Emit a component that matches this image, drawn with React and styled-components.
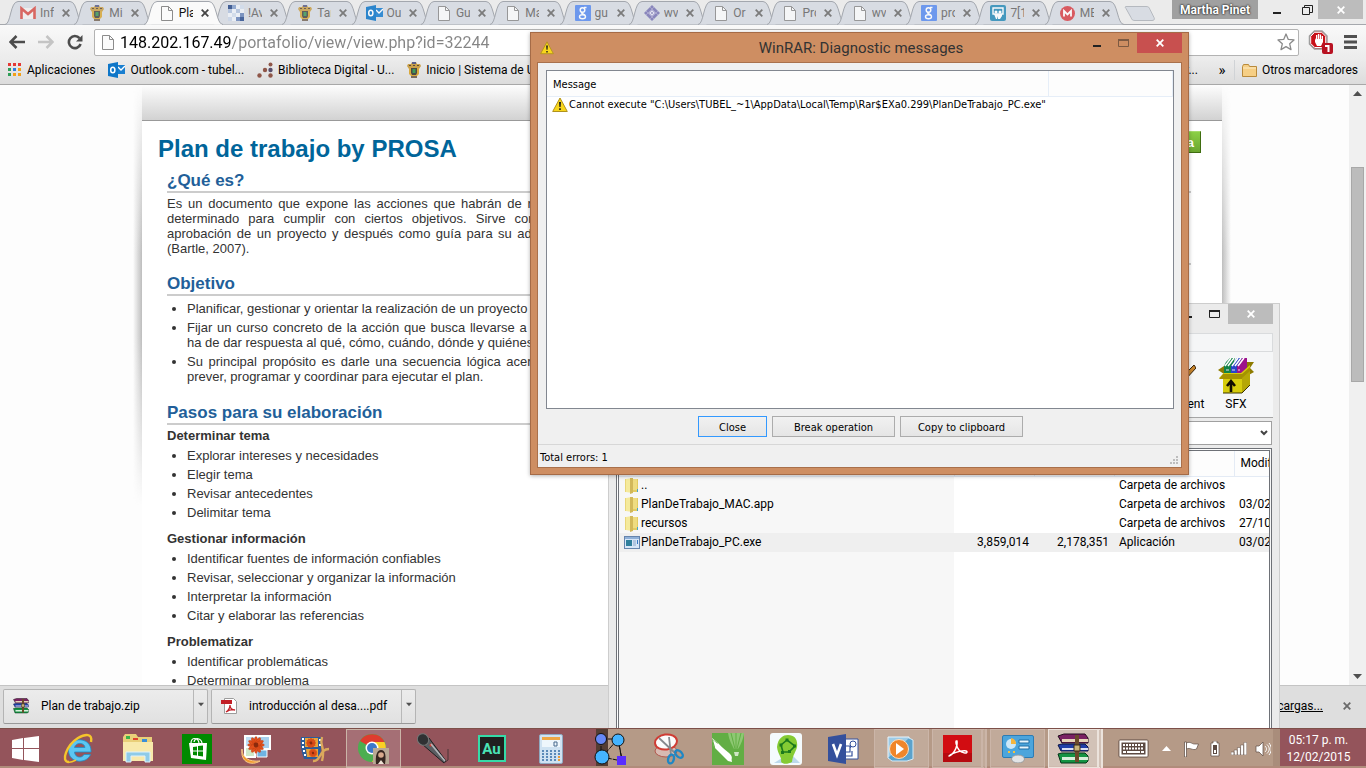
import React from 'react';
import styled, { createGlobalStyle } from 'styled-components';

const ui = 'Roboto, "Open Sans", sans-serif';
const tahoma = '"DejaVu Sans Condensed", "DejaVu Sans", sans-serif';
const arial = '"Liberation Sans", Arial, sans-serif';

const GlobalStyle = createGlobalStyle`
  *, *::before, *::after { box-sizing: border-box; }
  body { margin: 0; font-family: ${ui}; font-size: 12px; color: #000; }
  button, input, select { font: inherit; color: inherit; margin: 0; padding: 0; border: 0; background: none; }
  svg { display: block; flex: none; }
  h1, h2, h3, p, ul { margin: 0; padding: 0; }
`;

const Desktop = styled.div`
  position: relative;
  display: flex;
  flex-direction: column;
  height: 100vh;
  overflow: hidden;
`;

/* ---------- icons ---------- */

const PageIcon = ({ w = 12, h = 15 }) => (
  <svg width={w} height={h} viewBox="0 0 12 15">
    <path d="M.5.5h7l4 4v10H.5z" fill="#fbfbfb" stroke="#8c8c8c" />
    <path d="M7.5.5v4h4" fill="none" stroke="#8c8c8c" />
  </svg>
);
const GmailIcon = () => (
  <svg width="16" height="14" viewBox="0 0 16 14">
    <path d="M1 2h14v11H1z" fill="#f3f0ef" />
    <path d="M1.500 13V2.500L8 8l6.500-5.500V13" fill="none" stroke="#d9534c" strokeWidth="2.600" />
  </svg>
);
const CrestIcon = () => (
  <svg width="14" height="16" viewBox="0 0 14 16">
    <path d="M1 2h3l1-2h4l1 2h3l1 2-2 3H2L0 4z" fill="#c9a04a" />
    <path d="M5 0h4v2H5z" fill="#5b5f8a" /><path d="M2 3h2v1H2zM6 3h2v1H6zM10 3h2v1h-2z" fill="#5d4a3a" />
    <path d="M2 6h10v6l-2 2H4l-2-2z" fill="#d9a93c" />
    <path d="M4 6h6v5l-1 2H5l-1-2z" fill="#4a4a44" /><path d="M5.500 7h3v4h-3z" fill="#3f9a58" />
    <path d="M4 14h6v2H4z" fill="#7a6a5a" />
  </svg>
);
const MosaicIcon = () => (
  <svg width="16" height="16" viewBox="0 0 16 16">
    <rect width="16" height="16" fill="#eef2f8" />
    <path d="M0 0h4v4H0z" fill="#2a4a87" /><path d="M4 0h4v4H4z" fill="#88a2cc" />
    <path d="M0 4h4v4H0zM8 4h4v4H8z" fill="#b2c3de" /><path d="M12 0h4v4h-4zM4 8h4v4H4z" fill="#d1dcec" />
    <path d="M12 8h4v4h-4zM8 12h4v4H8z" fill="#6c88ba" /><path d="M12 12h4v4h-4z" fill="#2f5190" /><path d="M0 12h4v4H0z" fill="#c9d5e8" />
  </svg>
);
const OutlookIcon = () => (
  <svg width="17" height="16" viewBox="0 0 17 16">
    <path d="M9 3h8v9H9z" fill="#1a7fd0" /><path d="M10 5l3 3 4-4" fill="none" stroke="#fff" strokeWidth="1.300" />
    <path d="M0 2l10-2v16L0 14z" fill="#0e76c8" />
    <ellipse cx="4.800" cy="8" rx="2.100" ry="2.800" fill="none" stroke="#fff" strokeWidth="1.500" />
  </svg>
);
const GoogleIcon = () => (
  <svg width="16" height="16" viewBox="0 0 16 16">
    <rect width="16" height="16" rx="1" fill="#5b8def" />
    <circle cx="7.500" cy="5" r="2.300" fill="none" stroke="#fff" strokeWidth="1.500" />
    <path d="M9 2.500h2.500M7 7.300c-2 1 2.500 1.700 3 3" fill="none" stroke="#fff" strokeWidth="1.300" />
    <ellipse cx="7.500" cy="11.800" rx="3" ry="2" fill="none" stroke="#fff" strokeWidth="1.400" />
  </svg>
);
const DiamondIcon = () => (
  <svg width="16" height="16" viewBox="0 0 16 16">
    <path d="M8 0l8 8-8 8-8-8z" fill="#7c78b6" />
    <path d="M8 5l3 3-3 3-3-3z" fill="#e4e3f3" /><path d="M8 7l1 1-1 1-1-1z" fill="#5b569c" />
    <path d="M2 6l8 8M6 2l8 8M6 14l8-8M2 10l8-8" stroke="#b8b6da" strokeWidth=".6" />
  </svg>
);
const ShareIcon = () => (
  <svg width="16" height="16" viewBox="0 0 16 16">
    <rect width="16" height="16" rx="2" fill="#2c8db8" />
    <path d="M3 3h10v6H3z" fill="none" stroke="#fff" strokeWidth="1.400" />
    <circle cx="6" cy="7" r="1.500" fill="#fff" /><circle cx="10" cy="7" r="1.500" fill="#fff" /><path d="M4 9h8v2l-2 3H8v-3l-1 3H6z" fill="#fff" />
  </svg>
);
const MegaIcon = () => (
  <svg width="15" height="15" viewBox="0 0 15 15">
    <circle cx="7.500" cy="7.500" r="7.500" fill="#d9444a" />
    <path d="M4 10.500V5l3.500 3.500L11 5v5.500" fill="none" stroke="#fff" strokeWidth="1.800" />
  </svg>
);
const CrossIcon = ({ size = 8, color = '#6a6a6a', w = 1.8 }) => (
  <svg width={size} height={size} viewBox="0 0 8 8"><path d="M.7.7l6.600 6.600M7.300.7L.7 7.300" stroke={color} strokeWidth={w} /></svg>
);
const ArrowIcon = ({ color, flip }) => (
  <svg width="16" height="14" viewBox="0 0 16 14">
    <path d={flip ? 'M0 7h14M8.500 1l6 6-6 6' : 'M16 7H2M7.500 1l-6 6 6 6'} fill="none" stroke={color} strokeWidth="2.600" />
  </svg>
);
const ReloadIcon = () => (
  <svg width="16" height="16" viewBox="0 0 16 16">
    <path d="M12.500 4.200A6 6 0 1 0 13.600 10" fill="none" stroke="#4c4c4c" strokeWidth="2.600" />
    <path d="M15.500 1v6.500H9z" fill="#4c4c4c" />
  </svg>
);
const StarIcon = () => (
  <svg width="18" height="18" viewBox="0 0 18 18">
    <path d="M9 1l2.300 5.400 5.700.5-4.300 3.900 1.300 5.800L9 13.600l-5 3 1.300-5.800L1 6.900l5.700-.5z" fill="#fff" stroke="#8a8a8a" strokeWidth="1.300" strokeLinejoin="round" />
  </svg>
);
const AdblockIcon = () => (
  <svg width="25" height="24" viewBox="0 0 25 24">
    <path d="M6.500 1h7.500l5 5v8l-5 5H6.500l-5-5V6z" fill="#c81018" stroke="#9d9d9d" strokeWidth="1.500" />
    <path d="M6.700 2.300h7l4 4v7.200l-4 4h-7l-4-4V6.300z" fill="none" stroke="#fff" />
    <path d="M7 8v4l2 4h4l2-4V6h-1.300v3h-.6V4.600h-1.300V9h-.6V4H9.900v5h-.6V5H8v5z" fill="#fff" />
    <rect x="14" y="13" width="11" height="11" rx="2" fill="#b81222" />
    <path d="M17 16h3.500v6" fill="none" stroke="#fff" strokeWidth="2" />
  </svg>
);
const MenuIcon = () => (
  <svg width="13" height="14" viewBox="0 0 13 14"><path d="M0 1.500h13M0 7h13M0 12.500h13" stroke="#505050" strokeWidth="3" /></svg>
);
const AppsIcon = () => (
  <svg width="14" height="14" viewBox="0 0 14 14">
    {['#e53935', '#e53935', '#e53935', '#2e9e57', '#2f7de1', '#f2a019', '#2e9e57', '#f2a019', '#f2a019'].map((c, i) => (
      <rect key={i} x={(i % 3) * 5} y={Math.floor(i / 3) * 5} width="3" height="3" fill={c} />
    ))}
  </svg>
);
const DotsIcon = () => (
  <svg width="16" height="16" viewBox="0 0 16 16" fill="#8f5648">
    <circle cx="2.500" cy="13.500" r="2.200" /><circle cx="8" cy="8" r="2.200" /><circle cx="13.500" cy="13.500" r="2.200" />
    <circle cx="13.500" cy="2.500" r="2" /><circle cx="13.500" cy="8" r="2.200" fill="#574d6b" />
  </svg>
);
const BookmarkFolder = () => (
  <svg width="15" height="13" viewBox="0 0 15 13">
    <path d="M.5 12.500v-10l1-2h5l1 2h7v10z" fill="#f6cf85" stroke="#b98a3b" /><path d="M1 4h13" stroke="#fdebc4" />
  </svg>
);
const WarnIcon = ({ size = 16 }) => (
  <svg width={size} height={size} viewBox="0 0 16 16">
    <path d="M8 1l7.300 13.500H.7z" fill="#f8d61c" stroke="#b0921c" strokeLinejoin="round" />
    <path d="M7 5h2l-.4 5H7.400zM7.200 11.300h1.600v1.700H7.200z" fill="#1b1b1b" />
  </svg>
);
const FolderIcon = () => (
  <svg width="14" height="16" viewBox="0 0 14 16">
    <path d="M0 1h7v13H0z" fill="#ead678" /><path d="M6 1h7v13H6z" fill="#e3cb62" />
    <path d="M1 1l6-1v15l-6-1z" fill="#f5ea9c" /><path d="M5 0h3v15l-3 1z" fill="#d2b85a" /><path d="M8 1h4v11H8z" fill="#efdc80" /><path d="M12 11h1v3h-1z" fill="#4aa5c4" />
  </svg>
);
const ExeIcon = () => (
  <svg width="16" height="13" viewBox="0 0 16 13">
    <rect x=".5" y=".5" width="15" height="12" fill="#d7e6f7" stroke="#6685ad" />
    <path d="M1 1h14v2H1z" fill="#8fb0d8" /><path d="M2 4h6v6H2z" fill="#2f7f9c" /><path d="M9 5h3M9 7h3M9 9h3" stroke="#8aa6c8" /><path d="M13.500 4v4" stroke="#3577c4" />
  </svg>
);
const BooksIcon = ({ size = 16 }) => (
  <svg width={size} height={size} viewBox="0 0 32 32">
    <path d="M1 3l6-2h21l3 4v5H5z" fill="#7a2163" stroke="#220d1c" /><path d="M5 6h26v3H5z" fill="#e6d4b8" />
    <path d="M1 12l4-1h23l3 3v4H4z" fill="#213fa8" stroke="#0c1445" /><path d="M5 15h26v2H5z" fill="#dcdff2" />
    <path d="M1 21l4-1h23l3 3v5l-2 2H4z" fill="#159343" stroke="#08351a" /><path d="M5 24h26v3H5z" fill="#d8eedb" />
    <path d="M18 2h4v27h-4z" fill="#6b4a2a" /><path d="M17 12h6v6h-6z" fill="#c9b37a" stroke="#3a2c18" />
  </svg>
);
const PdfIcon = () => (
  <svg width="16" height="16" viewBox="0 0 16 16">
    <path d="M3.500.5h9l3 3v12h-12z" fill="#fff" stroke="#9c9c9c" /><path d="M0 2h11v4H0z" fill="#c21f26" />
    <path d="M5 14c3-2 4-5 4-7 0 3 2 5 5 5-3-1-6 0-9 2z" fill="none" stroke="#c21f26" strokeWidth="1.300" />
  </svg>
);
const SfxIcon = () => (
  <svg width="36" height="36" viewBox="0 0 36 36">
    <path d="M8 4l4-4h5l-4 16H6V8z" fill="#128347" /><path d="M13 8l6-8h5l-5 16h-6z" fill="#2745c8" /><path d="M19 8l5-8h5v11l-6 5h-4z" fill="#9c128c" />
    <path d="M7 8l6-8M10 8l6-8M14 8l6-8M17 8l6-8M20 8l6-8" stroke="#fff" strokeWidth="1.500" />
    <path d="M8 12h3M14 12h3M20 12h2" stroke="#e8d9f4" />
    <path d="M0 12l6-4v8zM29 4h7l-4 6 4 4-7 4z" fill="#8d7b00" />
    <path d="M1 20l5-5h17l9-8v20l-8 8H5V20z" fill="#d6cc0c" /><path d="M5 16h19l8-7v5l-8 7H1z" fill="#a59200" />
    <path d="M24 20v15l8-8V13z" fill="#b5a706" /><path d="M13 34V24M9 28l4-5 4 5" fill="none" stroke="#100c00" strokeWidth="2.600" /><path d="M5 35h19l8-8" fill="none" stroke="#3b3400" />
  </svg>
);
const CommentIcon = () => (
  <svg width="36" height="36" viewBox="0 0 36 36">
    <path d="M2 2h26v32H2z" fill="#33373c" /><path d="M4 4h20v28H4z" fill="#fff" />
    <path d="M34 7L22 19l-2 5 5-2L36 10z" fill="#c7842c" stroke="#35230c" />
  </svg>
);
const WinIcon = () => (
  <svg width="27" height="26" viewBox="0 0 27 26" fill="#fff"><path d="M0 4l11-2v10H0zM12 2l15-2v12H12zM0 13h11v11L0 22zM12 13h15v13l-15-2z" /></svg>
);
const IeIcon = () => (
  <svg width="32" height="32" viewBox="0 0 32 32">
    <path d="M28 19H11.500c.5 6 7.500 6.500 9.500 2.500h6.500C24 31 6 31 5.500 17.500 5.500 3 29 3 28 19zM11.500 14.500H22c-.5-5.500-9.500-5.500-10.500 0z" fill="#5cc6f2" stroke="#1b8fc9" strokeWidth=".8" />
    <path d="M6 29C-3 29 4 12 15 5c7-4 15-5 13 4" fill="none" stroke="#f5c52c" strokeWidth="2.400" />
    <path d="M5 29c2 1 6-1 8-2" fill="none" stroke="#f5c52c" strokeWidth="1.600" />
  </svg>
);
const ExplorerIcon = () => (
  <svg width="32" height="30" viewBox="0 0 32 30">
    <path d="M1 3l2-3h11l2 3h14v24H1z" fill="#e9cf79" /><path d="M4 2h4v3H4z" fill="#3bb54a" /><path d="M11 4h5v2h-5z" fill="#e0432f" /><path d="M20 5h5v3h-5z" fill="#3a8fd8" />
    <path d="M1 8h30v19H1z" fill="#f8e9ab" /><path d="M4 28V18h24v10h-5v-6H9v6z" fill="#8fcbe8" stroke="#dff2fb" />
  </svg>
);
const StoreIcon = () => (
  <svg width="30" height="30" viewBox="0 0 30 30">
    <rect width="30" height="30" fill="#008a00" /><path d="M7 9h18l-1 17-15-2z" fill="#fff" />
    <path d="M9 9c0-6 7-6 8 0M12 8c1-5 7-4 8 1" fill="none" stroke="#fff" strokeWidth="1.200" /><path d="M11 13l4-.5v4h-4zM16 12l5-.5v5h-5zM11 17.500h4v4l-4-.5zM16 17.500h5v5l-5-.8z" fill="#008a00" />
  </svg>
);
const Flower = ({ x, y, s = 1 }) => (
  <g transform={`translate(${x} ${y}) scale(${s})`}>
    {[0, 30, 60, 90, 120, 150].map((a) => <ellipse key={a} rx="7" ry="1.800" fill="#e0501c" stroke="#c23c10" strokeWidth=".4" transform={`rotate(${a})`} />)}
    <circle r="2" fill="#8b2a0c" />
  </g>
);
const PhotoIcon = () => (
  <svg width="32" height="30" viewBox="0 0 32 30">
    <path d="M5 2h20v16H5z" fill="#bfe0f6" stroke="#fff" strokeWidth="2" /><path d="M17 2h13v13H17z" fill="#a7d1ef" stroke="#fff" strokeWidth="2" />
    <path d="M5 13h10v10H5z" fill="#cfe8c9" stroke="#fff" strokeWidth="2" /><path d="M17 16h10v7H17z" fill="#6fb4e3" stroke="#fff" /><Flower x="16" y="11" s="1.200" />
    <path d="M2 15c0 9 7 13 18 12-8 5-20 2-18-12z" fill="#f29b2e" stroke="#f8c98a" />
  </svg>
);
const MovieIcon = () => (
  <svg width="31" height="28" viewBox="0 0 31 28">
    <path d="M2 2h21l-2 22H5C2 16 1 9 2 2z" fill="#2c5d9b" /><path d="M6 3h13v9H6zM7 14h12v8H8z" fill="#e9a33a" />
    <Flower x="12" y="8" s=".7" /><Flower x="14" y="18" s=".6" /><path d="M3 4h2M3 8h2M3 12h2M4 16h2M5 20h2M20 5h2M20 10h2" stroke="#fff" strokeWidth="2" />
    <path d="M23 2c-3 10 4 9 0 24M14 26c8 1 6-12 16-12" fill="none" stroke="#dba95c" strokeWidth="2.400" />
  </svg>
);
const ChromeIcon = () => (
  <svg width="31" height="30" viewBox="0 0 31 30">
    <circle cx="14" cy="14" r="14" fill="#4cae50" /><path d="M14 14L2 7A14 14 0 0 1 26.500 8z" fill="#df3c2e" /><path d="M14 8h12.500A14 14 0 0 1 14 28l6-11z" fill="#fbcf26" />
    <circle cx="14" cy="14" r="6.500" fill="#fff" /><circle cx="14" cy="14" r="5" fill="#3d78c9" />
    <rect x="15" y="14" width="16" height="16" fill="#b9a995" /><path d="M18 30c-1-8 1-14 5-14 5 0 5 7 4 14z" fill="#362620" /><circle cx="23" cy="21" r="2.800" fill="#d7a98c" /><path d="M20 30l3-4 3 4z" fill="#efe3d6" />
  </svg>
);
const MicIcon = () => (
  <svg width="32" height="32" viewBox="0 0 32 32">
    <path d="M5 11l7-6 17 23-2 2z" fill="#5a5d61" stroke="#1e1f20" /><ellipse cx="6" cy="6.500" rx="5.500" ry="6" fill="#2f3133" stroke="#777" transform="rotate(-35 6 6.500)" /><path d="M13 13l2-2" stroke="#e2362a" strokeWidth="2.400" />
    <path d="M14 11l14 17" stroke="#b3b6ba" strokeWidth="1.600" /><path d="M31 16v11l-4 3" fill="none" stroke="#4a3236" />
  </svg>
);
const AuBadge = styled.span`
  display: grid;
  place-items: center;
  width: 28px;
  height: 27px;
  border: 2px solid #35dba8;
  background: #20201f;
  color: #4be3b5;
  font-size: 15px;
  font-weight: 700;
  line-height: 22px;
`;
const CalcIcon = () => (
  <svg width="24" height="30" viewBox="0 0 24 30">
    <rect x=".5" y=".5" width="23" height="29" rx="1.500" fill="#cfe2f2" stroke="#8fa9c0" /><path d="M3 3h18v3H3z" fill="#eea644" /><path d="M3 6h18v7H3z" fill="#eef6fc" />
    <path d="M15 8h3v4h-3z" fill="none" stroke="#46688c" />
    {[0, 1, 2, 3].map((r) => [0, 1, 2, 3, 4].map((c) => <rect key={`${r}${c}`} x={3 + c * 4} y={16 + r * 3} width="2" height="2" fill={c === 4 && r > 1 ? '#ec9a34' : '#5b8ab8'} />))}
  </svg>
);
const GraphIcon = () => (
  <svg width="32" height="34" viewBox="0 0 32 34">
    <path d="M7 7h17M7 7v18M24 7L8 25l20 4zM24 7l4 20" fill="none" stroke="#111" strokeDasharray="6 1" />
    <circle cx="7" cy="7" r="5.500" fill="#6688f5" stroke="#111" /><circle cx="24" cy="8" r="6" fill="#45b4ff" stroke="#111" /><circle cx="8" cy="25" r="7" fill="#45b4ff" stroke="#111" />
    <path d="M23 24h9v9h-9z" fill="#5a2cff" />
  </svg>
);
const SnipIcon = () => (
  <svg width="31" height="32" viewBox="0 0 31 32">
    <ellipse cx="13" cy="18" rx="11" ry="6" fill="#d8bab2" stroke="#b3584d" /><ellipse cx="13" cy="9" rx="11" ry="7.500" fill="#fbfbfb" stroke="#cf3c34" strokeWidth="2" transform="rotate(-8 13 9)" />
    <path d="M6 5l16 15M16 4l2 18" stroke="#85898e" strokeWidth="1.800" /><ellipse cx="18" cy="26" rx="2.800" ry="4.500" fill="none" stroke="#1f87c4" strokeWidth="2.400" transform="rotate(15 18 26)" /><ellipse cx="26" cy="21" rx="2.800" ry="4.500" fill="none" stroke="#1f87c4" strokeWidth="2.400" transform="rotate(-45 26 21)" />
  </svg>
);
const CorelIcon = () => (
  <svg width="32" height="32" viewBox="0 0 32 32">
    <rect width="32" height="32" fill="#62ae44" /><path d="M0 5l2 9 14 14 4 1-1-5L6 10z" fill="#fff" /><path d="M4 12l11 12" stroke="#62ae44" /><path d="M0 6l2 10 4-6z" fill="#62ae44" /><path d="M1 7l2 7 15 14c3-3 2-5-1-8z" fill="#fff" />
    <path d="M16 0c1 7 4 12 6 16h4c3-5 5-9 6-16z" fill="#8ec873" /><path d="M19 0l4 16M24 0v16M29 0l-4 16" stroke="#62ae44" /><path d="M22 19h5l-1 4h-3z" fill="#cfe6c5" />
  </svg>
);
const HeadIcon = () => (
  <svg width="32" height="32" viewBox="0 0 32 32">
    <rect width="32" height="32" rx="3" fill="#f4fbfd" /><path d="M4 30h26L20 20z" fill="#bcd9ec" />
    <path d="M7 14C8 5 13 2 18 2c7 0 10 5 9 12-1 5-4 7-5 15-5 3-11 2-11-1 1-4-3-6-4-14z" fill="#84cb34" />
    <path d="M17 7l-6 5 2 7h6l6-6z" fill="none" stroke="#1c7a1d" strokeWidth="1.600" /><path d="M15.500 5.500h3v3h-3zM9.500 10.500h3v3h-3zM23 11.500h3v3h-3zM11 18h3v3h-3zM18 17h3v3h-3z" fill="#1c7a1d" />
  </svg>
);
const VisioIcon = () => (
  <svg width="31" height="30" viewBox="0 0 31 30">
    <path d="M16 5h14v20H16z" fill="#fff" stroke="#34509c" /><path d="M18 12h4v6h-4M24 17v5h-6M22 14l3-4" fill="none" stroke="#34509c" strokeWidth="1.200" /><circle cx="25" cy="10" r="3" fill="#fff" stroke="#34509c" />
    <path d="M0 3l18-3v30L0 27z" fill="#34509c" /><path d="M5 10l4 11 4-11" fill="none" stroke="#fff" strokeWidth="2.600" />
  </svg>
);
const WmpIcon = () => (
  <svg width="30" height="26" viewBox="0 0 30 26">
    <path d="M1 1h21v21H1z" fill="#9dcbe6" stroke="#eaf6fd" /><path d="M22 2l4 2v19l-6 2H5l-4-3" fill="#5ba2cb" stroke="#d4ebf7" /><circle cx="12" cy="13" r="9.500" fill="#f0862a" stroke="#fbe0c2" /><path d="M9 7l8 6-8 6z" fill="#fff" />
  </svg>
);
const AdobeIcon = () => (
  <svg width="29" height="27" viewBox="0 0 29 27">
    <rect width="29" height="27" fill="#d20d12" /><path d="M0 18h29v9H0z" fill="#a3090d" opacity=".6" />
    <path d="M6 21c4-1 9-9 8-15-2-1-1 5 2 9 3 3 8 4 8 2 0-3-14 0-18 4z" fill="none" stroke="#fff" strokeWidth="1.500" strokeLinejoin="round" />
  </svg>
);
const PanelIcon = () => (
  <svg width="32" height="28" viewBox="0 0 32 28">
    <rect x=".5" y=".5" width="31" height="22" rx="1.500" fill="#4ca5dc" stroke="#2c7cb4" /><circle cx="9" cy="9" r="5" fill="#cde8f8" /><path d="M9 9V3a6 6 0 0 1 5 6z" fill="#f5b53c" />
    <path d="M17 5h10v3H17zM17 11h10v3H17z" fill="#e8f5fc" stroke="#1f6ea6" /><path d="M6 17h2M11 17h2" stroke="#f6c13c" strokeWidth="2" /><ellipse cx="16" cy="24" rx="6.500" ry="4" fill="#e2e4e6" stroke="#9a9da0" />
  </svg>
);
const KeyboardIcon = () => (
  <svg width="31" height="19" viewBox="0 0 31 19">
    <rect x="1" y="1" width="29" height="17" rx="1" fill="none" stroke="#5c4a42" /><rect x="2.500" y="2.500" width="26" height="14" fill="#5c4a42" stroke="#fff" strokeWidth="2" />
    <path d="M5 6h21M5 9.500h21" stroke="#fff" strokeWidth="2" strokeDasharray="2 1" /><path d="M5 13h3M9 13h13M23 13h3" stroke="#fff" strokeWidth="2" />
  </svg>
);
const UpIcon = ({ color = '#fff' }) => (
  <svg width="9" height="5" viewBox="0 0 9 5"><path d="M0 5l4.500-5L9 5z" fill={color} /></svg>
);
const DownIcon = ({ w = 9, color = '#505050' }) => (
  <svg width={w} height="5" viewBox="0 0 9 5"><path d="M0 0h9L4.500 5z" fill={color} /></svg>
);
const FlagIcon = () => (
  <svg width="16" height="16" viewBox="0 0 16 16"><path d="M1.500 16V1h2v15z" fill="#fff" stroke="#5c4a42" strokeWidth=".7" /><path d="M3.500 2c4-2 5 1 8 1h4l-2 5c-4 2-6-2-10 0z" fill="#fff" stroke="#5c4a42" strokeWidth=".7" /></svg>
);
const BatteryIcon = () => (
  <svg width="10" height="16" viewBox="0 0 10 16"><path d="M3 0h4v2h2v13H1V2h2z" fill="#fff" stroke="#5c4a42" strokeWidth=".7" /><path d="M3 4h4v9H3z" fill="#5c4a42" /><path d="M4 9h2v3H4z" fill="#fff" /></svg>
);
const SignalIcon = () => (
  <svg width="16" height="13" viewBox="0 0 16 13" fill="#fff" stroke="#5c4a42" strokeWidth=".5"><path d="M0 10h3v3H0zM3.200 8h3v5h-3zM6.400 5.500h3V13h-3zM9.600 3h3v10h-3zM12.800.3h3V13h-3z" /></svg>
);
const VolumeIcon = () => (
  <svg width="16" height="16" viewBox="0 0 16 16"><path d="M1 5h3l4-4v14l-4-4H1z" fill="#fff" stroke="#5c4a42" strokeWidth=".7" /><path d="M10 5c2 2 2 4 0 6M12 3.500c3 3 3 6 0 9M14 2c3 4 3 8 0 12" fill="none" stroke="#fff" /></svg>
);
const MinimizeIcon = () => (
  <svg width="8" height="8"><path d="M0 7h8" stroke="#222" strokeWidth="2" /></svg>
);
const MaximizeIcon = ({ color = '#222' }) => (
  <svg width="11" height="8"><path d="M.5 1h10v6.500H.5z" fill="none" stroke={color} /><path d="M0 1h11" stroke={color} strokeWidth="2" /></svg>
);

/* ---------- browser ---------- */

const Browser = styled.div`
  flex: 1;
  min-height: 0;
  display: flex;
  flex-direction: column;
`;

const TabStrip = styled.div`
  display: flex;
  height: 25px;
  padding: 0 3px 0 5px;
  background: #ebebeb;
  border-bottom: 1px solid #a5a8ad;
`;
const TabList = styled.div`
  display: flex;
  flex: 0 0 1109px;
`;
const Tab = styled.button`
  position: relative;
  z-index: ${(p) => (p.$active ? 2 : 1)};
  display: flex;
  align-items: center;
  flex: 1 1 0;
  min-width: 0;
  height: 25px;
  padding: 1px 0 0 15px;
  color: ${(p) => (p.$active ? '#111' : '#777')};
`;
const TabShape = styled.svg`
  position: absolute;
  left: 0;
  top: 1px;
  z-index: -1;
`;
const TabIcon = styled.span`
  display: flex;
  justify-content: center;
  width: 16px;
  opacity: ${(p) => (p.$active ? 1 : 0.85)};
`;
const TabLabel = styled.span`
  width: 14px;
  margin: 0 8px 0 4px;
  overflow: hidden;
  white-space: nowrap;
  text-align: left;
`;
const NewTab = styled.button`
  width: 34px;
  height: 20px;
  margin-top: 3px;
`;
const BrowserControls = styled.div`
  display: flex;
  align-items: flex-start;
  margin-left: auto;
`;
const UserBadge = styled.button`
  height: 19px;
  width: 86px;
  background: #a0a0a0;
  color: #fff;
  font-weight: 700;
  line-height: 18px;
  text-shadow: 0 0 2px #222, 0 0 2px #222;
`;
const WindowButton = styled.button`
  display: grid;
  place-items: center;
  width: ${(p) => p.$w || 27}px;
  height: ${(p) => p.$h || 20}px;
  background: ${(p) => p.$bg || 'transparent'};
`;
const Toolbar = styled.div`
  display: flex;
  align-items: center;
  height: 34px;
  padding: 0 9px 0 9px;
  background: linear-gradient(#f9f9f9, #ececec);
`;
const NavButton = styled.button`
  display: grid;
  place-items: center;
  width: 16px;
  margin-right: 13px;
`;
const Omnibox = styled.label`
  display: flex;
  align-items: center;
  flex: 1;
  height: 27px;
  margin: 0 9px 0 -2px;
  padding: 0 3px 0 7px;
  gap: 6px;
  background: #fff;
  border: 1px solid #b3b3b3;
  border-radius: 2px;
`;
const UrlInput = styled.input`
  flex: 1;
  min-width: 0;
  height: 24px;
  font-size: 16px;
  outline: none;
  color: transparent;
  background: linear-gradient(to right, #000 111px, #858585 111px);
  background-clip: text;
  -webkit-background-clip: text;
`;
const MenuButton = styled.button`
  margin-left: ${(p) => p.$gap || 0}px;
`;
const BookmarksBar = styled.nav`
  display: flex;
  align-items: center;
  height: 26px;
  padding: 0 8px 3px 8px;
  background: linear-gradient(#ececec, #dcdcdc);
  border-bottom: 1px solid #a8a8a8;
`;
const Bookmark = styled.a`
  display: flex;
  align-items: center;
  gap: 5px;
  margin-right: ${(p) => (p.$last ? 0 : 13)}px;
  color: #000;
  text-decoration: none;
  white-space: nowrap;
`;
const BookmarksEnd = styled.div`
  display: flex;
  align-items: center;
  margin-left: auto;
`;
const Chevron = styled.button`
  width: 37px;
  height: 20px;
  margin-right: 7px;
  padding-left: 12px;
  border-right: 1px solid #d0d3d6;
  font-size: 15px;
  line-height: 16px;
`;

const Viewport = styled.div`
  flex: 1;
  min-height: 0;
  display: flex;
  background: #fdfdfd;
`;
const PageScroll = styled.div`
  flex: 1;
  overflow: hidden;
  padding: 0 127px 0 142px;
`;
const Page = styled.main`
  position: relative;
  min-height: 100%;
  background: #fff;
  font-family: ${arial};
  font-size: 13px;
  line-height: 15px;
  color: #333;
  &::before, &::after {
    content: '';
    position: absolute;
    top: 0;
    width: 9px;
    height: 420px;
    mask-image: linear-gradient(transparent, #000 40%, #000 60%, transparent);
  }
  &::before { right: 100%; background: linear-gradient(to left, #bdbdbd, transparent); }
  &::after { left: 100%; background: linear-gradient(to right, #bdbdbd, transparent); }
`;
const PageBand = styled.header`
  height: 36px;
  background: linear-gradient(#fdfdfd, #d2d2d2);
  border-bottom: 1px solid #999;
`;
const PageColumns = styled.div`
  display: grid;
  grid-template-columns: 1fr 260px;
  gap: 30px;
  padding: 0 31px 0 16px;
`;
const PageTitle = styled.h1`
  margin-top: 14px;
  font-size: 24px;
  line-height: 28px;
  color: #00659a;
`;
const Article = styled.article`
  padding: 8px 0 0 9px;
`;
const Heading = styled.h2`
  margin-top: ${(p) => (p.$first ? 0 : 18)}px;
  font-size: 17px;
  line-height: 20px;
  color: #225f99;
  border-bottom: 2px solid #ccc;
`;
const SubHeading = styled.h3`
  margin-top: ${(p) => (p.$first ? 3 : 10)}px;
  font-size: 13px;
  line-height: 15px;
`;
const Spread = styled.span`
  display: block;
  width: 372px;
  white-space: nowrap;
  text-align-last: justify;
`;
const Plain = styled.span`
  display: block;
  white-space: nowrap;
`;
const Intro = styled.p`
  margin-top: 3px;
`;
const Bullets = styled.ul`
  margin-top: 5px;
  padding: 0 0 1px 20px;
  ${Spread} { width: 351px; }
`;
const Bullet = styled.li`
  & + & { margin-top: 4px; }
`;
const Aside = styled.aside`
  padding-top: 10px;
  display: flex;
  flex-direction: column;
`;
const GreenButton = styled.button`
  align-self: flex-end;
  width: 70px;
  height: 22px;
  margin: 0 -10px 38px 0;
  padding-right: 6px;
  text-align: right;
  background: linear-gradient(#8bd046, #6aa52f);
  border: 1px solid #3f6d10;
  border-top-color: #a4dc6c;
  color: #fff;
  font-weight: 700;
`;
const AsideRule = styled.hr`
  width: 100%;
  margin: 0 0 70px;
  border: 0;
  border-top: 2px solid #ccc;
`;

const ScrollBar = styled.div`
  display: flex;
  flex-direction: column;
  width: 17px;
  background: #f0f0f0;
`;
const ScrollButton = styled.button`
  display: grid;
  place-items: center;
  height: 17px;
`;
const Track = styled.div`
  flex: 1;
  display: grid;
  grid-template-rows: 65fr 215fr 286fr;
  padding: 0 2px;
`;
const Thumb = styled.div`
  grid-row: 2;
  background: #bcbcbc;
  border: 1px solid #a8a8a8;
`;

const DownloadBar = styled.footer`
  display: flex;
  align-items: center;
  gap: 3px;
  height: 43px;
  padding: 0 15px 2px 3px;
  background: #dedede;
  border-top: 1px solid #c4c4c4;
`;
const DownloadItem = styled.div`
  display: flex;
  width: 205px;
  height: 35px;
  background: linear-gradient(#ececec, #e1e1e1);
  border: 1px solid #b4b4b4;
  border-bottom-color: #999;
  border-radius: 2px;
`;
const DownloadFile = styled.button`
  display: flex;
  align-items: center;
  gap: 12px;
  flex: 1;
  padding-left: 9px;
  white-space: nowrap;
`;
const DownloadMore = styled.button`
  display: grid;
  place-items: start center;
  width: 14px;
  padding-top: 12px;
  border-left: 1px solid #b8b8b8;
`;
const AllDownloads = styled.a`
  margin-left: auto;
  margin-right: 17px;
  color: #000;
`;

/* ---------- archive window ---------- */

const ArchiveWindow = styled.section`
  position: absolute;
  left: 608px;
  top: 303px;
  bottom: 40px;
  width: 672px;
  display: flex;
  flex-direction: column;
  padding: 0 6px 0 7px;
  background: #ebebeb;
  border: 1px solid #cdcdcd;
  border-bottom: 0;
`;
const ArchiveTitle = styled.header`
  display: flex;
  justify-content: flex-end;
  height: 29px;
`;
const ArchiveMenu = styled.div`
  height: 19px;
  background: #f5f6f7;
  border: 1px solid #d9dbdd;
  border-width: 1px 1px 1px 0;
`;
const ArchiveTools = styled.div`
  display: flex;
  justify-content: flex-end;
  height: 66px;
  padding: 6px 8px 0 0;
  background: #f5f6f7;
  border-bottom: 1px solid #a6a6a6;
`;
const ToolButton = styled.button`
  display: flex;
  flex-direction: column;
  align-items: center;
  width: 58px;
  line-height: 20px;
`;
const PathSelect = styled.div`
  position: relative;
  display: flex;
  margin: 3px 1px 3px 0;
  svg { position: absolute; right: 4px; top: 9px; pointer-events: none; }
`;
const PathField = styled.select`
  appearance: none;
  flex: 1;
  height: 24px;
  background: #fff;
  border: 1px solid #a0a0a0;
`;
const FilePane = styled.div`
  flex: 1;
  min-height: 0;
  margin-right: 1px;
  overflow: hidden;
  background: linear-gradient(to right, #f7f7f7 335px, #fff 335px);
  border: 3px double #6e7177;
  border-bottom: 0;
`;
const FileTable = styled.table`
  table-layout: fixed;
  width: 700px;
  border-collapse: collapse;
  white-space: nowrap;
  th { height: 25px; padding: 0 6px; font-weight: 400; text-align: left; background: #fdfdfd; border: 1px solid #e4ebf5; border-width: 0 1px 1px 0; }
  td { height: 19px; padding: 0 5px; line-height: 17px; }
`;
const FileRow = styled.tr`
  background: ${(p) => (p.$selected ? '#efefef' : 'transparent')};
`;
const NumberCell = styled.td`
  text-align: right;
`;
const FileName = styled.span`
  display: flex;
  align-items: center;
  gap: 1px;
`;
const FileIconSlot = styled.span`
  display: flex;
  justify-content: center;
  width: 16px;
`;

/* ---------- dialog ---------- */

const Dialog = styled.section`
  position: absolute;
  left: 530px;
  top: 32px;
  width: 659px;
  display: flex;
  flex-direction: column;
  padding: 0 6px 6px;
  background: #ce8e62;
  border: 1px solid #a56b47;
  box-shadow: 0 1px 4px rgba(0, 0, 0, 0.3);
  font-family: ${tahoma};
  font-size: 11px;
`;
const DialogTitleBar = styled.header`
  display: grid;
  grid-template-columns: 104px 1fr 104px;
  align-items: center;
  height: 29px;
  padding-left: 3px;
  font-family: ${ui};
  h2 { font-size: 15px; font-weight: 400; text-align: center; color: #333; }
`;
const DialogButtons = styled.div`
  display: flex;
  align-self: start;
  justify-content: flex-end;
`;
const DialogBody = styled.div`
  padding-top: 7px;
  background: #f0f0f0;
  border: 1px solid #a9704b;
`;
const MessageList = styled.div`
  height: 339px;
  margin: 0 7px 0 8px;
  background: #fff;
  border: 1px solid #828790;
`;
const MessageTable = styled.table`
  width: 100%;
  border-collapse: collapse;
  table-layout: fixed;
  th { height: 25px; padding: 2px 6px 0; text-align: left; font-weight: 400; background: #fdfdfd; border: 1px solid #e6eef8; border-width: 0 1px 1px 0; }
  td { height: 17px; padding: 0 0 0 5px; }
`;
const MessageLine = styled.span`
  display: flex;
  align-items: center;
  gap: 1px;
  white-space: nowrap;
`;
const ActionRow = styled.div`
  display: flex;
  justify-content: center;
  gap: 5px;
  padding: 7px 0 7px 2px;
`;
const ActionButton = styled.button`
  width: ${(p) => (p.$primary ? 69 : 123)}px;
  height: 21px;
  padding-top: 1px;
  background: linear-gradient(#f1f1f1, #e5e5e5);
  border: 1px solid ${(p) => (p.$primary ? '#3399ff' : '#acacac')};
`;
const StatusBar = styled.div`
  display: flex;
  align-items: center;
  justify-content: space-between;
  height: 23px;
  padding: 2px 2px 0 2px;
  border-top: 1px solid #d7d7d7;
`;

/* ---------- taskbar ---------- */

const TaskBar = styled.footer`
  display: flex;
  align-items: stretch;
  height: 40px;
  background: linear-gradient(to right, #94545b 596px, #553d33 596px, #553d33 608px, #b59a87 608px, #b59a87 1273px, #a98d7b 1273px, #a98d7b 1280px, #94545b 1280px);
  border-top: 1px solid #7d5049;
  box-shadow: inset 0 -2px #b08c7b;
`;
const StartButton = styled.button`
  display: grid;
  place-items: center;
  width: 51px;
`;
const TaskGroup = styled.div`
  display: flex;
  gap: ${(p) => p.$gap}px;
  margin-right: 4px;
`;
const Task = styled.button`
  display: grid;
  place-items: center;
  width: 55px;
  border: 1px solid ${(p) => (p.$state ? (p.$state === 'front' ? '#ece3dc' : '#cbb5a8') : 'transparent')};
  background: ${(p) => (p.$state ? (p.$state === 'front' ? 'rgba(255,255,255,0.4)' : 'rgba(255,255,255,0.16)') : 'transparent')};
  border-right-width: ${(p) => (p.$stack ? 6 : 1)}px;
  border-right-style: ${(p) => (p.$stack ? 'double' : 'solid')};
`;
const Tray = styled.div`
  display: flex;
  align-items: center;
  gap: 8px;
  margin-left: auto;
`;
const TrayButton = styled.button`
  display: grid;
  place-items: center;
  width: ${(p) => p.$w || 16}px;
`;
const Clock = styled.time`
  width: 87px;
  padding-right: 8px;
  text-align: center;
  color: #fff;
  line-height: 17px;
`;

const tabs = [
  ['Inf', GmailIcon], ['Mi', CrestIcon], ['Pla', PageIcon], ['!Av', MosaicIcon], ['Tar', CrestIcon], ['Ou', OutlookIcon],
  ['Gu', PageIcon], ['Ma', PageIcon], ['gu', GoogleIcon], ['wv', DiamondIcon], ['Or', PageIcon], ['Pro', PageIcon],
  ['wv', PageIcon], ['pro', GoogleIcon], ['7[1', ShareIcon], ['ME', MegaIcon],
];
const files = [
  ['..', '', '', 'Carpeta de archivos', ''],
  ['PlanDeTrabajo_MAC.app', '', '', 'Carpeta de archivos', '03/02/2015'],
  ['recursos', '', '', 'Carpeta de archivos', '27/10/2014'],
  ['PlanDeTrabajo_PC.exe', '3,859,014', '2,178,351', 'Aplicación', '03/02/2015'],
];
const steps = [
  ['Determinar tema', ['Explorar intereses y necesidades', 'Elegir tema', 'Revisar antecedentes', 'Delimitar tema']],
  ['Gestionar información', ['Identificar fuentes de información confiables', 'Revisar, seleccionar y organizar la información', 'Interpretar la información', 'Citar y elaborar las referencias']],
  ['Problematizar', ['Identificar problemáticas', 'Determinar problema']],
];
const pinned = [
  ['Internet Explorer', <IeIcon />], ['Explorador', <ExplorerIcon />], ['Tienda', <StoreIcon />], ['Fotos', <PhotoIcon />], ['Movie Maker', <MovieIcon />],
  ['Chrome', <ChromeIcon />, 'open'], ['Grabadora', <MicIcon />], ['Audition', <AuBadge>Au</AuBadge>], ['Calculadora', <CalcIcon />], ['yEd', <GraphIcon />], ['Recortes', <SnipIcon />],
];
const running = [
  ['Corel', <CorelIcon />], ['Mapas', <HeadIcon />], ['Visio', <VisioIcon />], ['Media Player', <WmpIcon />, 'open'],
  ['Reader', <AdobeIcon />, 'open', true], ['Panel de control', <PanelIcon />, 'open'], ['WinRAR', <BooksIcon size={32} />, 'front', true],
];

const TabItem = ({ label, Icon, active }) => (
  <Tab role="tab" aria-selected={active} $active={active}>
    <TabShape width="80" height="25" viewBox="0 0 80 25">
      <path d="M0 23.500C6 23.500 5 .5 13 .5h52c8 0 7 23 14 23" fill={active ? '#fafafa' : '#d8dce3'} stroke="#a3a7ae" />
      {active && <path d="M2 24.200h76" stroke="#fafafa" strokeWidth="1.600" />}
    </TabShape>
    <TabIcon $active={active}><Icon /></TabIcon>
    <TabLabel>{label}</TabLabel>
    <CrossIcon color={active ? '#444' : '#7b7b7b'} />
  </Tab>
);

const TaskItem = ({ item: [name, icon, state, stack] }) => (
  <Task aria-label={name} $state={state} $stack={stack}>{icon}</Task>
);

export default function App() {
  return (
    <Desktop>
      <GlobalStyle />
      <Browser>
        <TabStrip>
          <TabList role="tablist">
            {tabs.map(([label, Icon], i) => <TabItem key={i} label={label} Icon={Icon} active={i === 2} />)}
          </TabList>
          <NewTab aria-label="Nueva pestaña">
            <svg width="44" height="18" viewBox="0 0 44 18"><path d="M12 2.500h20c3 0 3 1 4 3l4 8c1 2 0 3-2 3H21c-3 0-3-1-4-3l-5-9c-1-1-1-2 0-2z" fill="#d8dce3" stroke="#b5b9bf" /></svg>
          </NewTab>
          <BrowserControls>
            <UserBadge>Martha Pinet</UserBadge>
            <WindowButton aria-label="Minimizar" $w={38}><MinimizeIcon /></WindowButton>
            <WindowButton aria-label="Restaurar" $w={22}><svg width="11" height="10" viewBox="0 0 11 10"><path d="M.5 2.500h7v7h-7zM2.500 2V.5h8v7H8" fill="none" stroke="#222" /></svg></WindowButton>
            <WindowButton aria-label="Cerrar" $w={45} $h={19} $bg="#bcbcbc"><CrossIcon color="#fff" /></WindowButton>
          </BrowserControls>
        </TabStrip>
        <Toolbar>
          <NavButton aria-label="Atrás"><ArrowIcon color="#4c4c4c" /></NavButton>
          <NavButton aria-label="Adelante"><ArrowIcon color="#c4c4c4" flip /></NavButton>
          <NavButton aria-label="Recargar"><ReloadIcon /></NavButton>
          <Omnibox>
            <PageIcon />
            <UrlInput aria-label="Dirección" defaultValue="148.202.167.49/portafolio/view/view.php?id=32244" />
            <StarIcon />
          </Omnibox>
          <MenuButton aria-label="AdBlock"><AdblockIcon /></MenuButton>
          <MenuButton aria-label="Menú" $gap={11}><MenuIcon /></MenuButton>
        </Toolbar>
        <BookmarksBar>
          <Bookmark href="#"><AppsIcon />Aplicaciones</Bookmark>
          <Bookmark href="#"><OutlookIcon />Outlook.com - tubel...</Bookmark>
          <Bookmark href="#"><DotsIcon />Biblioteca Digital - U...</Bookmark>
          <Bookmark href="#"><CrestIcon />Inicio | Sistema de U...</Bookmark>
          <BookmarksEnd>
            <Bookmark href="#" $last>r...</Bookmark>
            <Chevron aria-label="Más marcadores">»</Chevron>
            <Bookmark href="#" $last><BookmarkFolder />Otros marcadores</Bookmark>
          </BookmarksEnd>
        </BookmarksBar>
        <Viewport>
          <PageScroll>
            <Page>
              <PageBand />
              <PageColumns>
                <div>
                  <PageTitle>Plan de trabajo by PROSA</PageTitle>
                  <Article>
                    <Heading $first>¿Qué es?</Heading>
                    <Intro>
                      <Spread>Es un documento que expone las acciones que habrán de re</Spread>
                      <Spread>determinado para cumplir con ciertos objetivos. Sirve com</Spread>
                      <Spread>aprobación de un proyecto y después como guía para su ada</Spread>
                      <Plain>(Bartle, 2007).</Plain>
                    </Intro>
                    <Heading>Objetivo</Heading>
                    <Bullets>
                      <Bullet><Plain>Planificar, gestionar y orientar la realización de un proyecto</Plain></Bullet>
                      <Bullet>
                        <Spread>Fijar un curso concreto de la acción que busca llevarse a c</Spread>
                        <Plain>ha de dar respuesta al qué, cómo, cuándo, dónde y quiénes</Plain>
                      </Bullet>
                      <Bullet>
                        <Spread>Su principal propósito es darle una secuencia lógica acerc</Spread>
                        <Plain>prever, programar y coordinar para ejecutar el plan.</Plain>
                      </Bullet>
                    </Bullets>
                    <Heading>Pasos para su elaboración</Heading>
                    {steps.map(([title, items], i) => (
                      <React.Fragment key={title}>
                        <SubHeading $first={i === 0}>{title}</SubHeading>
                        <Bullets>{items.map((t) => <Bullet key={t}>{t}</Bullet>)}</Bullets>
                      </React.Fragment>
                    ))}
                  </Article>
                </div>
                <Aside>
                  <GreenButton>Descarga</GreenButton>
                  <AsideRule />
                  <AsideRule />
                </Aside>
              </PageColumns>
            </Page>
          </PageScroll>
          <ScrollBar>
            <ScrollButton aria-label="Subir"><UpIcon color="#505050" /></ScrollButton>
            <Track><Thumb /></Track>
            <ScrollButton aria-label="Bajar"><DownIcon /></ScrollButton>
          </ScrollBar>
        </Viewport>
        <DownloadBar>
          <DownloadItem>
            <DownloadFile><BooksIcon />Plan de trabajo.zip</DownloadFile>
            <DownloadMore aria-label="Opciones"><DownIcon w={6} /></DownloadMore>
          </DownloadItem>
          <DownloadItem>
            <DownloadFile><PdfIcon />introducción al desa....pdf</DownloadFile>
            <DownloadMore aria-label="Opciones"><DownIcon w={6} /></DownloadMore>
          </DownloadItem>
          <AllDownloads href="#">Mostrar todas las descargas...</AllDownloads>
          <button aria-label="Cerrar barra"><CrossIcon /></button>
        </DownloadBar>
      </Browser>

      <ArchiveWindow>
        <ArchiveTitle>
          <WindowButton aria-label="Minimizar"><MinimizeIcon /></WindowButton>
          <WindowButton aria-label="Maximizar"><MaximizeIcon /></WindowButton>
          <WindowButton aria-label="Cerrar" $w={45} $bg="#bcbcbc"><CrossIcon color="#fff" /></WindowButton>
        </ArchiveTitle>
        <ArchiveMenu />
        <ArchiveTools>
          <ToolButton><CommentIcon />Comment</ToolButton>
          <ToolButton><SfxIcon />SFX</ToolButton>
        </ArchiveTools>
        <PathSelect>
          <PathField aria-label="Ruta"><option></option></PathField>
          <svg width="8" height="6" viewBox="0 0 8 6"><path d="M1 1l3 3 3-3" fill="none" stroke="#444" strokeWidth="2" /></svg>
        </PathSelect>
        <FilePane>
          <FileTable>
            <colgroup><col width="335" /><col width="80" /><col width="80" /><col width="120" /><col width="85" /></colgroup>
            <thead><tr><th>Name</th><th>Size</th><th>Packed</th><th>Type</th><th>Modified</th></tr></thead>
            <tbody>
              {files.map(([name, size, packed, type, date], i) => (
                <FileRow key={name} $selected={i === 3}>
                  <td><FileName><FileIconSlot>{i === 3 ? <ExeIcon /> : <FolderIcon />}</FileIconSlot>{name}</FileName></td>
                  <NumberCell>{size}</NumberCell>
                  <NumberCell>{packed}</NumberCell>
                  <td>{type}</td>
                  <td>{date}</td>
                </FileRow>
              ))}
            </tbody>
          </FileTable>
        </FilePane>
      </ArchiveWindow>

      <Dialog role="dialog" aria-labelledby="dialog-title">
        <DialogTitleBar>
          <WarnIcon size={14} />
          <h2 id="dialog-title">WinRAR: Diagnostic messages</h2>
          <DialogButtons>
            <WindowButton aria-label="Minimizar"><MinimizeIcon /></WindowButton>
            <WindowButton aria-label="Maximizar"><MaximizeIcon color="#7d5a42" /></WindowButton>
            <WindowButton aria-label="Cerrar" $w={45} $bg="#c8504f"><CrossIcon color="#fff" /></WindowButton>
          </DialogButtons>
        </DialogTitleBar>
        <DialogBody>
          <MessageList>
            <MessageTable>
              <colgroup><col width="501" /><col /></colgroup>
              <thead><tr><th>Message</th><th aria-label="Detalle" /></tr></thead>
              <tbody>
                <tr><td colSpan="2"><MessageLine><WarnIcon />Cannot execute "C:\Users\TUBEL_~1\AppData\Local\Temp\Rar$EXa0.299\PlanDeTrabajo_PC.exe"</MessageLine></td></tr>
              </tbody>
            </MessageTable>
          </MessageList>
          <ActionRow>
            <ActionButton $primary>Close</ActionButton>
            <ActionButton>Break operation</ActionButton>
            <ActionButton>Copy to clipboard</ActionButton>
          </ActionRow>
          <StatusBar>
            Total errors: 1
            <svg width="9" height="16" viewBox="0 0 9 16" fill="#bdbdbd"><path d="M6 7h2v2H6zM3 10h2v2H3zM6 10h2v2H6zM0 13h2v2H0zM3 13h2v2H3zM6 13h2v2H6z" /></svg>
          </StatusBar>
        </DialogBody>
      </Dialog>

      <TaskBar>
        <StartButton aria-label="Inicio"><WinIcon /></StartButton>
        <TaskGroup $gap={4}>{pinned.map((t) => <TaskItem key={t[0]} item={t} />)}</TaskGroup>
        <TaskGroup $gap={3}>{running.map((t) => <TaskItem key={t[0]} item={t} />)}</TaskGroup>
        <Tray>
          <TrayButton aria-label="Teclado" $w={31}><KeyboardIcon /></TrayButton>
          <TrayButton aria-label="Iconos ocultos" $w={18}><UpIcon /></TrayButton>
          <TrayButton aria-label="Centro de actividades"><FlagIcon /></TrayButton>
          <TrayButton aria-label="Batería"><BatteryIcon /></TrayButton>
          <TrayButton aria-label="Red"><SignalIcon /></TrayButton>
          <TrayButton aria-label="Volumen"><VolumeIcon /></TrayButton>
          <Clock>05:17 p. m.<br />12/02/2015</Clock>
        </Tray>
      </TaskBar>
    </Desktop>
  );
}
